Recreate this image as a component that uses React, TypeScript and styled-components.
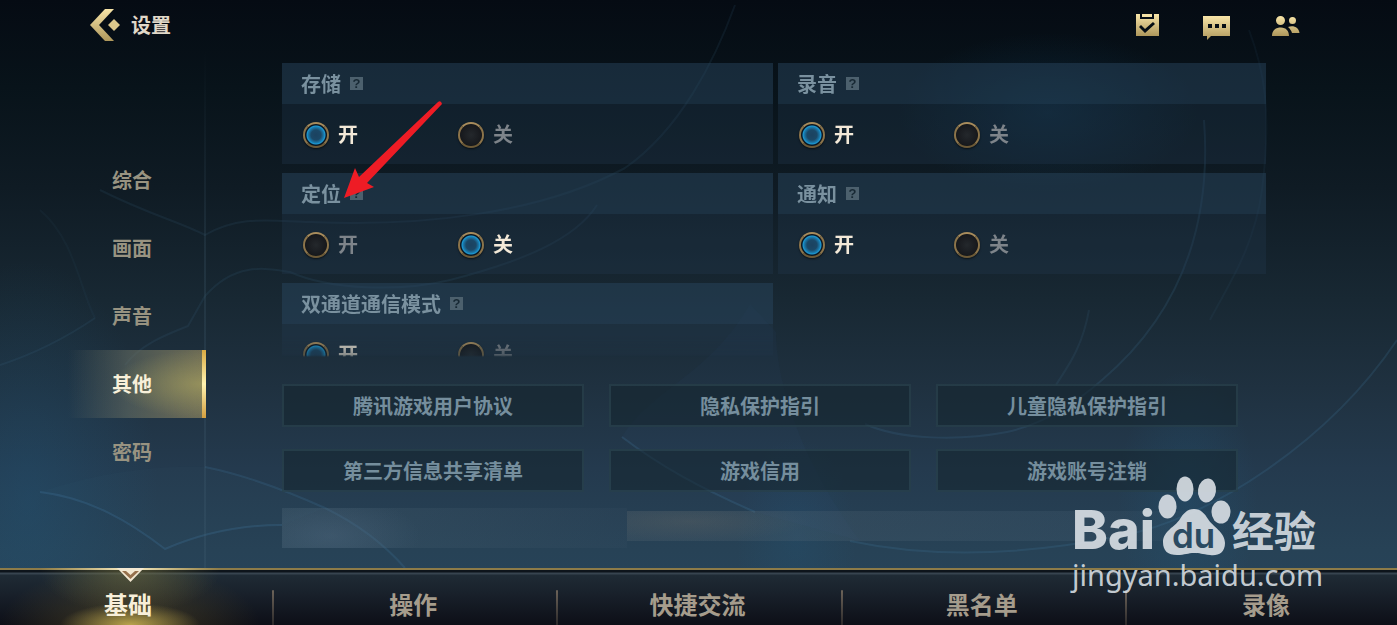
import React from 'react';
import styled, { createGlobalStyle, css } from 'styled-components';

const GlobalStyle = createGlobalStyle`
  * { box-sizing: border-box; }
  body {
    margin: 0;
    background: #050b12;
    font-family: "Noto Sans CJK SC", "Noto Sans", sans-serif;
  }
  button { font-family: inherit; border: 0; padding: 0; background: none; cursor: pointer; }
`;

const Page = styled.div`
  position: relative;
  display: flex;
  flex-direction: column;
  height: 100vh;
  min-height: 560px;
  overflow: hidden;
  background:
    radial-gradient(ellipse 130px 240px at 2% 80%, rgba(32, 92, 130, 0.3), transparent),
    radial-gradient(ellipse 150px 80px at 75% 18%, rgba(20, 74, 112, 0.28), transparent),
    radial-gradient(ellipse 70px 130px at 85% 80%, rgba(32, 92, 130, 0.28), transparent),
    radial-gradient(ellipse 60px 100px at 57% 86%, rgba(32, 92, 130, 0.22), transparent),
    linear-gradient(#050b13 0%, #08131a 14%, #0f1b24 30%, #182833 48%, #1f3140 62%, #243a4e 75%, #274256 88%, #28455c 100%);
`;

const Backdrop = styled.svg`
  position: absolute;
  inset: 0;
  width: 100%;
  height: 100%;
  pointer-events: none;
`;

const Header = styled.header`
  position: relative;
  display: flex;
  align-items: center;
  justify-content: space-between;
  height: 50px;
  padding: 0 97px 0 90px;
`;

const BackButton = styled.button`
  display: flex;
  align-items: center;
  gap: 11px;
  color: #e0d8c8;
  font-size: 20px;
  line-height: 32px;
  font-weight: 700;
`;

const HeaderActions = styled.div`
  display: flex;
  gap: 40px;
`;

const IconButton = styled.button`
  width: 29px;
  height: 31px;
  svg { display: block; }
`;

const Body = styled.div`
  position: relative;
  display: flex;
  flex: 1;
  min-height: 0;
`;

const Sidebar = styled.nav`
  display: flex;
  flex-direction: column;
  width: 206px;
  padding: 96px 0 0 68px;
  border-right: 2px solid;
  border-image: linear-gradient(rgba(70, 100, 120, 0), rgba(70, 100, 120, 0.22) 40%) 1;
`;

const SideItem = styled.button<{ $active?: boolean }>`
  height: 68px;
  padding: 0 0 1px 44px;
  text-align: left;
  font-size: 20px;
  font-weight: 700;
  color: #989381;
  ${(p) =>
    p.$active &&
    css`
      color: #f8f0da;
      margin-right: -2px;
      border-right: 4px solid;
      border-image: linear-gradient(#d9a83f, #fff3b0 50%, #d39d3c) 1;
      background:
        radial-gradient(ellipse 90px 34px at 100% 50%, rgba(176, 168, 96, 0.6), transparent),
        linear-gradient(90deg, rgba(90, 104, 104, 0) 0%, rgba(100, 108, 98, 0.6) 45%, rgba(122, 118, 90, 0.85));
    `}
`;

const Main = styled.main`
  display: flex;
  flex: 1;
  flex-direction: column;
  min-width: 0;
  padding: 13px 131px 19px 76px;
`;

const OptionList = styled.div`
  display: grid;
  flex: 1;
  min-height: 0;
  grid-template-columns: 491fr 488fr;
  grid-auto-rows: 101px;
  gap: 9px 5px;
  overflow: hidden;
  mask-image: linear-gradient(#000 calc(100% - 24px), rgba(0, 0, 0, 0.5) calc(100% - 4px), transparent calc(100% - 2px));
`;

const OptionCard = styled.fieldset`
  min-width: 0;
  margin: 0;
  padding: 0;
  border: 0;
  background: rgba(38, 60, 82, 0.3);
`;

const OptionHead = styled.div`
  display: flex;
  align-items: center;
  gap: 9px;
  height: 41px;
  padding-left: 19px;
  background: rgba(46, 80, 108, 0.26);
  color: #7a919f;
  font-size: 20px;
  font-weight: 700;
`;

const HelpButton = styled.button`
  width: 13px;
  height: 13px;
  background: #4c606d;
  color: #172833;
  font: 700 13px/14px "Liberation Sans", sans-serif;
  text-align: center;
`;

const Choices = styled.div`
  display: flex;
  align-items: center;
  height: 60px;
  padding-left: 21px;
`;

const Choice = styled.label<{ $on: boolean }>`
  display: flex;
  align-items: center;
  gap: 9px;
  width: 155px;
  font-size: 20px;
  line-height: 28px;
  font-weight: 700;
  color: ${(p) => (p.$on ? '#f3e9d8' : '#7e848a')};
`;

const Radio = styled.input`
  appearance: none;
  flex: none;
  width: 26px;
  height: 26px;
  margin: 2px 0 0;
  border: 2px solid;
  border-color: #a88c5c #8c744a #6c5936;
  border-radius: 50%;
  background: radial-gradient(circle, #24282c 0, #17191d 10px, #0e1114 12px);
  box-shadow: 0 1px 2px rgba(0, 0, 0, 0.6);
  &:checked {
    background: radial-gradient(circle, #1b4260 0, #1b4867 5px, #1a7eb2 8px, #1b9ad5 9px, #0b1722 10px);
  }
`;

const LinkGrid = styled.div`
  display: grid;
  grid-template-columns: repeat(3, 1fr);
  gap: 22px 25px;
  margin: 25px 28px 16px 0;
`;

const LinkButton = styled.button`
  height: 43px;
  border: 2px solid rgba(70, 104, 116, 0.28);
  background: rgba(20, 36, 45, 0.55);
  color: #758e9d;
  font-size: 20px;
  line-height: 36px;
  font-weight: 700;
`;

const Smudges = styled.div`
  display: flex;
  align-items: flex-start;
  height: 41px;
`;

const SmudgeLeft = styled.div`
  flex: 345;
  height: 40px;
  background:
    radial-gradient(ellipse 90px 40px at 14% 70%, rgba(90, 115, 140, 0.3), transparent),
    linear-gradient(90deg, rgba(80, 105, 120, 0.26), rgba(70, 90, 110, 0.1));
`;

const SmudgeRight = styled.div`
  flex: 639;
  height: 30px;
  margin-top: 3px;
  background:
    radial-gradient(ellipse 120px 20px at 10% 35%, rgba(115, 110, 100, 0.22), transparent),
    linear-gradient(90deg, rgba(90, 105, 115, 0.26), rgba(80, 105, 125, 0.2) 70%, rgba(80, 105, 125, 0) 95%);
`;

const TabBar = styled.nav`
  position: relative;
  display: grid;
  grid-template-columns: repeat(5, 1fr);
  flex: none;
  height: 57px;
  margin: 0 -12px;
  border-top: 2px solid #8d7b48;
  background: linear-gradient(#0d141b 0 2px, #37444f 3px 4px, #1f2b35 5px, #171e28 28px, #0d0f17 55px);
`;

const Tab = styled.button<{ $active?: boolean }>`
  position: relative;
  padding: 0 4px 4px 0;
  padding-top: 16px;
  font-size: 24px;
  line-height: 34px;
  font-weight: 700;
  color: #a59c8c;
  & + & {
    border-left: 2px solid;
    border-image: linear-gradient(transparent 20px, #6b6258 21px, #2a2829 100%) 1;
  }
  ${(p) =>
    p.$active &&
    css`
      color: #f8efd9;
      background:
        radial-gradient(ellipse 70px 22px at 50% 100%, rgba(206, 182, 84, 0.85), transparent),
        radial-gradient(ellipse 90px 44px at 50% 0, rgba(120, 116, 66, 0.55), transparent),
        radial-gradient(ellipse 130px 60px at 50% 100%, rgba(110, 92, 40, 0.5), transparent);
    `}
`;

const TabMarker = styled.svg`
  position: absolute;
  top: -2px;
  left: 50%;
  margin-left: -90px;
`;

const PointerArrow = styled.svg`
  position: absolute;
  left: 343px;
  top: 100px;
  pointer-events: none;
`;

const Watermark = styled.div`
  position: absolute;
  right: 74px;
  bottom: 31px;
  width: 251px;
  color: rgba(218, 224, 230, 0.9);
  pointer-events: none;
`;

const Brand = styled.div`
  display: flex;
  align-items: flex-end;
  height: 78px;
`;

const BrandLatin = styled.span`
  width: 86px;
  font: 800 54px/52px Inter, sans-serif;
  white-space: nowrap;
`;

const BrandHan = styled.span`
  font-size: 42px;
  line-height: 54px;
  font-weight: 700;
  white-space: nowrap;
`;

const BrandUrl = styled.div`
  font: 400 29px/38px "Noto Sans", sans-serif;
  white-space: nowrap;
`;

const sections = ['综合', '画面', '声音', '其他', '密码'];
const tabs = ['基础', '操作', '快捷交流', '黑名单', '录像'];
const links = ['腾讯游戏用户协议', '隐私保护指引', '儿童隐私保护指引', '第三方信息共享清单', '游戏信用', '游戏账号注销'];
const initialOptions = [
  { id: 'storage', title: '存储', on: true },
  { id: 'record', title: '录音', on: true },
  { id: 'location', title: '定位', on: false },
  { id: 'notice', title: '通知', on: true },
  { id: 'dual', title: '双通道通信模式', on: true },
];

function Gold({ id }: { id: string }) {
  return (
    <defs>
      <linearGradient id={id} x1="0" y1="0" x2="0" y2="1">
        <stop offset="0" stopColor="#f8e5a8" />
        <stop offset="1" stopColor="#ae975b" />
      </linearGradient>
    </defs>
  );
}

function Scenery() {
  return (
    <Backdrop viewBox="0 0 1397 625" preserveAspectRatio="xMidYMid slice" fill="none" aria-hidden="true">
      <g stroke="#4a86b0" strokeOpacity="0.1" strokeWidth="2">
        <path d="M40 492C90 498 130 522 165 549C200 534 240 525 282 525" strokeOpacity="0.22" />
        <path d="M205 467C240 474 285 490 325 508C360 525 385 545 405 568" strokeOpacity="0.18" />
        <path d="M100 190C150 215 180 222 205 235C240 215 270 221 310 222C420 227 540 214 625 168C680 130 715 60 735 5" />
        <path d="M205 296C235 262 265 268 290 272C330 290 400 292 450 280C520 262 575 240 597 205" />
        <path d="M125 365C140 345 165 335 188 326L205 296M0 365C40 352 70 335 95 318" />
        <path d="M40 210C75 240 80 290 95 318" strokeOpacity="0.05" />
        <path d="M1204 120C1210 200 1196 300 1102 380C1070 408 1040 425 1007 432C960 441 900 440 865 424" strokeOpacity="0.15" />
        <path d="M1249 30C1264 70 1272 110 1262 190C1254 250 1225 290 1210 320" strokeOpacity="0.07" />
        <path d="M1089 310C1082 350 1065 370 1056 385" />
        <path d="M622 437C660 466 700 488 755 512" strokeOpacity="0.2" />
        <path d="M850 541C930 558 1020 556 1120 536C1210 520 1330 440 1397 340" strokeOpacity="0.17" />
      </g>
      <path d="M622 437C650 390 710 375 750 304L776 332C776 380 800 460 860 541L755 512C700 488 660 466 622 437Z" fill="#3a6a9a" fillOpacity="0.05" />
      <path d="M40 492C90 498 130 522 165 549C200 534 240 525 282 525L325 508C285 490 240 474 205 467C150 465 90 475 40 492Z" fill="#4778a0" fillOpacity="0.04" />
    </Backdrop>
  );
}

export default function App() {
  const [section, setSection] = React.useState('其他');
  const [tab, setTab] = React.useState('基础');
  const [options, setOptions] = React.useState(initialOptions);
  const choose = (id: string, on: boolean) =>
    setOptions((list) => list.map((o) => (o.id === id ? { ...o, on } : o)));

  return (
    <Page>
      <GlobalStyle />
      <Scenery />
      <Header>
        <BackButton type="button">
          <svg width="30" height="32" viewBox="0 0 30 32" aria-hidden="true">
            <Gold id="gold-back" />
            <path d="M15 0H24L9 16L24 32H15L0 16Z" fill="url(#gold-back)" />
            <path d="M24 10L30 16L24 22L18 16Z" fill="#dcc88c" />
          </svg>
          设置
        </BackButton>
        <HeaderActions>
          <IconButton type="button" aria-label="任务">
            <svg width="29" height="31" viewBox="0 0 29 31">
              <Gold id="gold-task" />
              <path d="M3 4H7V9H21V4H26V26H3ZM6 17L12 23L22 14L20 12L12 19L8 15Z" fillRule="evenodd" fill="url(#gold-task)" />
              <path d="M9 4H19V7H9Z" fill="#f5e2a6" />
            </svg>
          </IconButton>
          <IconButton type="button" aria-label="聊天">
            <svg width="29" height="31" viewBox="0 0 29 31">
              <Gold id="gold-chat" />
              <path d="M1 6H28V26H9L5 30V26H1ZM6 14V18H10V14ZM13 14V18H17V14ZM20 14V18H24V14Z" fillRule="evenodd" fill="url(#gold-chat)" />
            </svg>
          </IconButton>
          <IconButton type="button" aria-label="好友">
            <svg width="29" height="31" viewBox="0 0 29 31">
              <Gold id="gold-friends" />
              <g fill="url(#gold-friends)">
                <path d="M5 10.500a4.500 4.500 0 1 1 9 0a4.500 4.500 0 1 1 -9 0ZM1 26C1 20 5 17.500 10 17.500C15 17.500 18 21 18 26ZM18 10.500a3.500 3.500 0 1 1 7 0a3.500 3.500 0 1 1 -7 0ZM17 17C23 15 28 18 28.500 23H21C20 20 19 19 17 17Z" />
              </g>
            </svg>
          </IconButton>
        </HeaderActions>
      </Header>

      <Body>
        <Sidebar aria-label="设置分类">
          {sections.map((s) => (
            <SideItem key={s} type="button" $active={s === section} onClick={() => setSection(s)}>
              {s}
            </SideItem>
          ))}
        </Sidebar>
        <Main>
          <OptionList>
            {options.map((o) => (
              <OptionCard key={o.id} aria-label={o.title}>
                <OptionHead>
                  {o.title}
                  <HelpButton type="button">?</HelpButton>
                </OptionHead>
                <Choices>
                  <Choice $on={o.on}>
                    <Radio type="radio" name={o.id} checked={o.on} onChange={() => choose(o.id, true)} />开
                  </Choice>
                  <Choice $on={!o.on}>
                    <Radio type="radio" name={o.id} checked={!o.on} onChange={() => choose(o.id, false)} />关
                  </Choice>
                </Choices>
              </OptionCard>
            ))}
          </OptionList>
          <LinkGrid>
            {links.map((l) => (
              <LinkButton key={l} type="button">{l}</LinkButton>
            ))}
          </LinkGrid>
          <Smudges aria-hidden="true">
            <SmudgeLeft />
            <SmudgeRight />
          </Smudges>
        </Main>
      </Body>

      <TabBar aria-label="设置页签">
        {tabs.map((t) => (
          <Tab key={t} type="button" $active={t === tab} onClick={() => setTab(t)}>
            {t === tab && (
              <TabMarker width="180" height="16" viewBox="0 0 180 16" aria-hidden="true">
                <defs>
                  <linearGradient id="marker-line">
                    <stop offset="0" stopColor="#f3dd90" stopOpacity="0" />
                    <stop offset="0.5" stopColor="#fdf3d0" />
                    <stop offset="1" stopColor="#f3dd90" stopOpacity="0" />
                  </linearGradient>
                </defs>
                <rect width="180" height="2" fill="url(#marker-line)" />
                <path d="M77 0H104L90.500 14Z" fill="#f3e8d2" />
                <path d="M82 3H86L90.500 7L95 3H99L90.500 11Z" fill="#96704c" />
              </TabMarker>
            )}
            {t}
          </Tab>
        ))}
      </TabBar>

      <PointerArrow width="101" height="101" viewBox="0 0 101 101" aria-hidden="true">
        <path d="M1 98L12 68L16 77L95 2Q98 0 99 4L24 83L31 87Z" fill="#ee1c25" />
      </PointerArrow>

      <Watermark>
        <Brand>
          <BrandLatin>Bai</BrandLatin>
          <svg width="74" height="80" viewBox="0 0 74 80" aria-hidden="true">
            <g fill="currentColor">
              <ellipse cx="9.500" cy="30.500" rx="9" ry="12" />
              <ellipse cx="27" cy="13" rx="8.500" ry="12.500" />
              <ellipse cx="49" cy="14.500" rx="9" ry="12" transform="rotate(8 49 14.500)" />
              <ellipse cx="63" cy="36" rx="9.500" ry="11.500" />
              <path d="M36 33C43 33 47 38 50 43C55 51 67 56 67 67C67 77 60 80 52 79C44 78 42 77 36 77C30 77 27 79 19 79C10 79 5 75 5 66C5 55 17 51 22 43C25 38 29 33 36 33Z" />
            </g>
            <text x="14" y="72" fontFamily="Inter, sans-serif" fontWeight="600" fontSize="35" fill="#2b4b62">du</text>
          </svg>
          <BrandHan>经验</BrandHan>
        </Brand>
        <BrandUrl>jingyan.baidu.com</BrandUrl>
      </Watermark>
    </Page>
  );
}
